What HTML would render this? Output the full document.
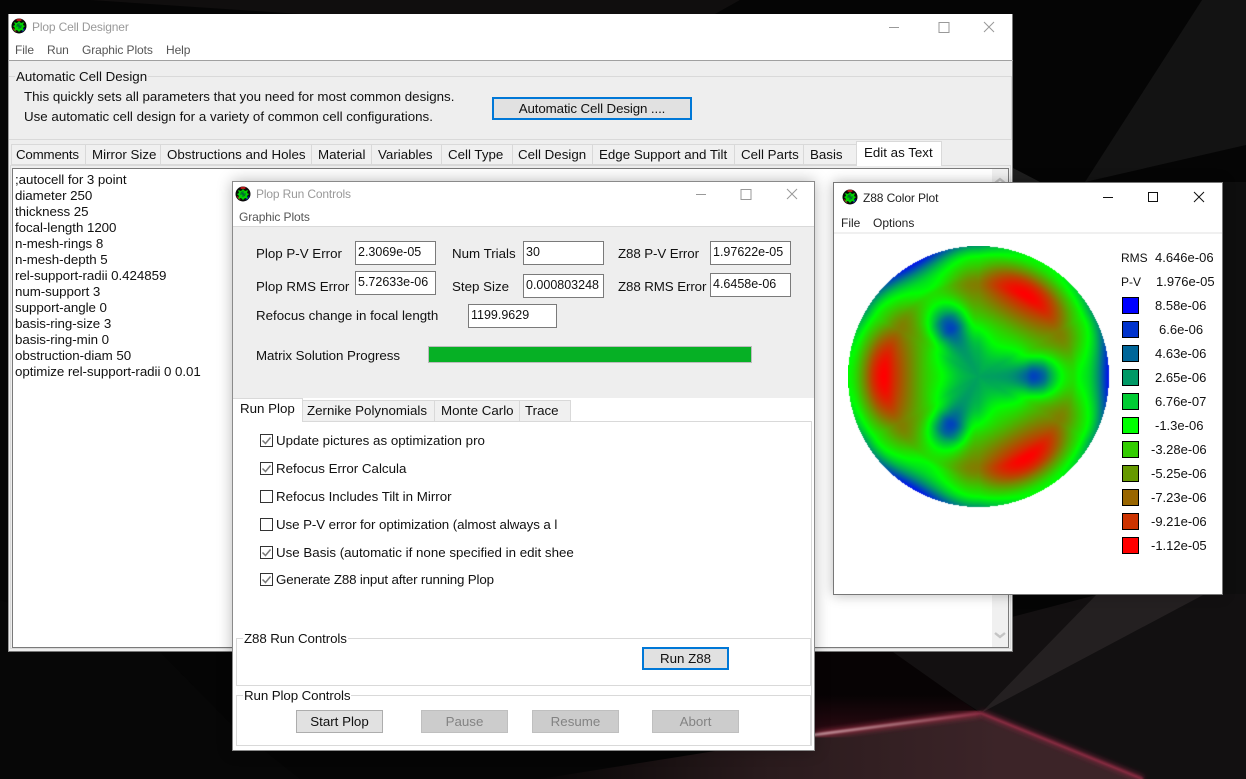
<!DOCTYPE html>
<html><head><meta charset="utf-8"><title>Plop Cell Designer</title>
<style>
html,body{margin:0;padding:0;width:1246px;height:779px;overflow:hidden;background:#050505}
body{position:relative;font-family:"Liberation Sans",sans-serif;font-size:13.33px;color:#111}
div,span,canvas,svg{position:absolute;box-sizing:border-box}
.t{white-space:nowrap;line-height:16px;height:16px;margin-top:1px}
.ttl{font-size:12px;color:#999;margin-top:0;letter-spacing:-.15px}
.mn{font-size:12px;color:#555;margin-top:0;letter-spacing:-.1px}
.tab{background:#f0f0f0;border:1px solid #d9d9d9;border-bottom:1px solid #d9d9d9;top:144px;height:21px}
.tab2{background:#f0f0f0;border:1px solid #d9d9d9;top:400px;height:22px}
.fld{background:#fff;border:1px solid #7a7a7a;line-height:20px;padding-left:2px;white-space:nowrap;font-size:12.5px}
.btn{background:#e1e1e1;text-align:center;white-space:nowrap}
.dis{background:#ccc;border:1px solid #bfbfbf;color:#838383;text-align:center;line-height:21px;width:87px;height:23px;top:710px}
.cb{left:260px;width:13px;height:13px;border:1px solid #333;background:#fff}
.sw{left:1122px;width:17px;height:17px;border:1px solid #000}
.l{font-size:13px}
</style></head><body>

<svg style="left:0;top:0" width="1246" height="779" viewBox="0 0 1246 779">
<defs>
<linearGradient id="floor" x1="540" y1="0" x2="1000" y2="0" gradientUnits="userSpaceOnUse"><stop offset="0" stop-color="#070606"/><stop offset=".5" stop-color="#2a1b1d"/><stop offset="1" stop-color="#3c2428"/></linearGradient>
<linearGradient id="glow" x1="0" y1="695" x2="0" y2="735" gradientUnits="userSpaceOnUse"><stop offset="0" stop-color="#070304"/><stop offset="1" stop-color="#2c0a12"/></linearGradient>
<linearGradient id="bright" x1="815" y1="0" x2="981" y2="0" gradientUnits="userSpaceOnUse"><stop offset="0" stop-color="#f0d0d4"/><stop offset=".6" stop-color="#b8808a"/><stop offset="1" stop-color="#98304a"/></linearGradient>
<filter id="b1"><feGaussianBlur stdDeviation="1"/></filter>
<filter id="b3"><feGaussianBlur stdDeviation="3"/></filter>
</defs>
<rect width="1246" height="779" fill="#050505"/>
<polygon points="90,0 740,0 715,14 300,14" fill="#100e0e"/>
<polygon points="0,600 160,652 232,725 300,779 0,779" fill="#070707"/>
<polygon points="1085,182 1202,0 1246,0 1246,145" fill="#131313"/>
<polygon points="1013,168 1040,182 1013,182" fill="#1e1e1e"/>
<polygon points="1222,182 1246,182 1246,594 1222,594" fill="#0e0e0e"/>
<polygon points="981,713 1100,594 1246,594 1246,779 1143,779" fill="#121011"/>
<polygon points="885,650 1100,594 981,713" fill="#131011"/>
<polygon points="815,652 893,652 978,712 815,735" fill="url(#glow)"/>
<polygon points="981,713 1097,594 1205,594" fill="#242021"/>
<polygon points="540,779 815,735 981,713 1143,779" fill="url(#floor)"/>
<polyline points="815,735 981,713" fill="none" stroke="#8a2c3e" stroke-width="6" filter="url(#b3)"/>
<polyline points="981,713 1143,779" fill="none" stroke="#8a2640" stroke-width="4" filter="url(#b3)"/>
<polyline points="981,713 1143,779" fill="none" stroke="#9c3048" stroke-width="1.6" filter="url(#b1)"/>
<line x1="790" y1="738" x2="981" y2="713" stroke="url(#bright)" stroke-width="1.8" filter="url(#b1)"/>
</svg>

<!-- MAIN WINDOW -->
<div style="left:8px;top:14px;width:1005px;height:638px;background:#eee;border:1px solid #777;border-top:0;border-left-color:#999">
</div>
<div style="left:9px;top:14px;width:1003px;height:46px;background:#fff"></div>
<div style="left:8px;top:60px;width:1005px;height:1px;background:#a0a0a0"></div>
<svg style="left:11px;top:18px" width="16" height="16" viewBox="0 0 16 16"><circle cx="8" cy="8" r="7.5" fill="#0a0a0a"/><path d="M8 .8a7 7 0 0 1 3 .7L10 3H6L5 1.5A7 7 0 0 1 8 .8z" fill="#b01818"/><path d="M1.5 10l3 1 1 3.2A7 7 0 0 1 1.5 10z" fill="#a01818"/><path d="M14.5 10l-3 1-1 3.2A7 7 0 0 0 14.5 10z" fill="#0000b0"/><path d="M3 4l3 1 2-2 2 2 3-1-1 3 2 1-2 2 1 3-3-1-2 2-2-2-3 1 1-3-2-2 2-1z" fill="#00d000"/><path d="M8 5v6M5 8h6M6 6l4 4" stroke="#063" stroke-width="1"/></svg>
<div class="t ttl" style="left:32px;top:19px">Plop Cell Designer</div>
<div class="t mn" style="left:15px;top:42px">File</div>
<div class="t mn" style="left:47px;top:42px">Run</div>
<div class="t mn" style="left:82px;top:42px">Graphic Plots</div>
<div class="t mn" style="left:166px;top:42px">Help</div>
<svg style="left:880px;top:14px" width="130" height="26"><path d="M9 13.5h10M59 8.5h10v10h-10zM104 8l10 10M114 8l-10 10" fill="none" stroke="#999" stroke-width="1"/></svg>

<div style="left:9px;top:76px;width:1003px;height:64px;border-top:1px solid #d9d9d9;border-bottom:1px solid #d9d9d9;border-right:1px solid #d9d9d9"></div>
<div class="t" style="left:15px;top:68px;background:#eee;padding:0 1px">Automatic Cell Design</div>
<div class="t" style="left:24px;top:88px">This quickly sets all parameters that you need for most common designs.</div>
<div class="t" style="left:24px;top:108px">Use automatic cell design for a variety of common cell configurations.</div>
<div class="btn" style="left:492px;top:97px;width:200px;height:23px;border:2px solid #0078d7;line-height:20px;letter-spacing:-.12px">Automatic Cell Design ....</div>

<div style="left:10px;top:165px;width:1001px;height:484px;border:1px solid #d9d9d9"></div>
<div class="tab" style="left:11px;width:75px"></div><div class="t" style="left:16px;top:146px;letter-spacing:-.2px">Comments</div>
<div class="tab" style="left:85px;width:76px"></div><div class="t" style="left:92px;top:146px">Mirror Size</div>
<div class="tab" style="left:160px;width:152px"></div><div class="t" style="left:167px;top:146px">Obstructions and Holes</div>
<div class="tab" style="left:311px;width:61px"></div><div class="t" style="left:318px;top:146px">Material</div>
<div class="tab" style="left:371px;width:71px"></div><div class="t" style="left:378px;top:146px">Variables</div>
<div class="tab" style="left:441px;width:72px"></div><div class="t" style="left:448px;top:146px">Cell Type</div>
<div class="tab" style="left:512px;width:81px"></div><div class="t" style="left:518px;top:146px">Cell Design</div>
<div class="tab" style="left:592px;width:143px"></div><div class="t" style="left:599px;top:146px">Edge Support and Tilt</div>
<div class="tab" style="left:734px;width:70px"></div><div class="t" style="left:741px;top:146px">Cell Parts</div>
<div class="tab" style="left:803px;width:54px"></div><div class="t" style="left:810px;top:146px">Basis</div>
<div style="left:856px;top:141px;width:86px;height:25px;background:#fff;border:1px solid #d9d9d9;border-bottom:0"></div>
<div class="t" style="left:864px;top:144px">Edit as Text</div>

<div style="left:12px;top:168px;width:997px;height:480px;background:#fff;border:1px solid #7a7a7a;border-width:1px"></div>
<div style="left:992px;top:169px;width:16px;height:478px;background:#f0f0f0"></div>
<svg style="left:992px;top:172px" width="16" height="472"><path d="M3 11l5-4 5 4" fill="none" stroke="#c4c4c4" stroke-width="2.4"/><path d="M3 461l5 4 5-4" fill="none" stroke="#c4c4c4" stroke-width="2.4"/></svg>
<div class="t" style="left:15px;top:171px;line-height:16px;height:auto;letter-spacing:-.05px">;autocell for 3 point<br>diameter 250<br>thickness 25<br>focal-length 1200<br>n-mesh-rings 8<br>n-mesh-depth 5<br>rel-support-radii 0.424859<br>num-support 3<br>support-angle 0<br>basis-ring-size 3<br>basis-ring-min 0<br>obstruction-diam 50<br>optimize rel-support-radii 0 0.01</div>

<!-- RUN WINDOW -->
<div style="left:232px;top:181px;width:583px;height:570px;background:#fff;border:1px solid #8a8a8a;box-shadow:0 0 14px rgba(0,0,0,.28)"></div>
<div style="left:233px;top:226px;width:581px;height:172px;background:#eee;border-top:1px solid #d9d9d9"></div>
<svg style="left:235px;top:186px" width="16" height="16" viewBox="0 0 16 16"><circle cx="8" cy="8" r="7.5" fill="#0a0a0a"/><path d="M8 .8a7 7 0 0 1 3 .7L10 3H6L5 1.5A7 7 0 0 1 8 .8z" fill="#b01818"/><path d="M1.5 10l3 1 1 3.2A7 7 0 0 1 1.5 10z" fill="#a01818"/><path d="M14.5 10l-3 1-1 3.2A7 7 0 0 0 14.5 10z" fill="#0000b0"/><path d="M3 4l3 1 2-2 2 2 3-1-1 3 2 1-2 2 1 3-3-1-2 2-2-2-3 1 1-3-2-2 2-1z" fill="#00d000"/><path d="M8 5v6M5 8h6M6 6l4 4" stroke="#063" stroke-width="1"/></svg>
<div class="t ttl" style="left:256px;top:186px">Plop Run Controls</div>
<div class="t mn" style="left:239px;top:209px">Graphic Plots</div>
<svg style="left:690px;top:181px" width="120" height="26"><path d="M6 13.5h10M51 8.5h10v10h-10zM97 8l10 10M107 8l-10 10" fill="none" stroke="#999" stroke-width="1"/></svg>

<div class="t" style="left:256px;top:245px">Plop P-V Error</div>
<div class="t" style="left:256px;top:278px">Plop RMS Error</div>
<div class="t" style="left:256px;top:307px">Refocus change in focal length</div>
<div class="t" style="left:256px;top:347px;letter-spacing:-.05px">Matrix Solution Progress</div>
<div class="t" style="left:452px;top:245px">Num Trials</div>
<div class="t" style="left:452px;top:278px">Step Size</div>
<div class="t" style="left:618px;top:245px;letter-spacing:-.1px">Z88 P-V Error</div>
<div class="t" style="left:618px;top:278px;letter-spacing:-.1px">Z88 RMS Error</div>
<div class="fld" style="left:355px;top:241px;width:81px;height:24px">2.3069e-05</div>
<div class="fld" style="left:355px;top:271px;width:81px;height:24px">5.72633e-06</div>
<div class="fld" style="left:523px;top:241px;width:81px;height:24px">30</div>
<div class="fld" style="left:523px;top:274px;width:81px;height:24px">0.000803248</div>
<div class="fld" style="left:710px;top:241px;width:81px;height:24px">1.97622e-05</div>
<div class="fld" style="left:710px;top:273px;width:81px;height:24px">4.6458e-06</div>
<div class="fld" style="left:468px;top:304px;width:89px;height:24px">1199.9629</div>
<div style="left:428px;top:346px;width:324px;height:17px;background:#06b025;border:1px solid #bcbcbc"></div>

<div style="left:233px;top:421px;width:579px;height:1px;background:#d9d9d9"></div>
<div style="left:811px;top:421px;width:1px;height:325px;background:#d9d9d9"></div>
<div class="tab2" style="left:302px;width:133px"></div><div class="t" style="left:307px;top:402px">Zernike Polynomials</div>
<div class="tab2" style="left:434px;width:86px"></div><div class="t" style="left:441px;top:402px">Monte Carlo</div>
<div class="tab2" style="left:519px;width:52px"></div><div class="t" style="left:525px;top:402px">Trace</div>
<div style="left:233px;top:398px;width:70px;height:24px;background:#fff;border:1px solid #d9d9d9;border-bottom:0;border-left:0"></div>
<div class="t" style="left:240px;top:400px">Run Plop</div>

<div class="cb" style="top:434px"></div><svg style="left:260px;top:434px" width="13" height="13"><path d="M2.5 6.5l3 3 5-6" fill="none" stroke="#777" stroke-width="1.5"/></svg>
<div class="t" style="left:276px;top:432px">Update pictures as optimization pro</div>
<div class="cb" style="top:462px"></div><svg style="left:260px;top:462px" width="13" height="13"><path d="M2.5 6.5l3 3 5-6" fill="none" stroke="#777" stroke-width="1.5"/></svg>
<div class="t" style="left:276px;top:460px">Refocus Error Calcula</div>
<div class="cb" style="top:490px"></div>
<div class="t" style="left:276px;top:488px">Refocus Includes Tilt in Mirror</div>
<div class="cb" style="top:518px"></div>
<div class="t" style="left:276px;top:516px;letter-spacing:-.08px">Use P-V error for optimization (almost always a l</div>
<div class="cb" style="top:546px"></div><svg style="left:260px;top:546px" width="13" height="13"><path d="M2.5 6.5l3 3 5-6" fill="none" stroke="#777" stroke-width="1.5"/></svg>
<div class="t" style="left:276px;top:544px">Use Basis (automatic if none specified in edit shee</div>
<div class="cb" style="top:573px"></div><svg style="left:260px;top:573px" width="13" height="13"><path d="M2.5 6.5l3 3 5-6" fill="none" stroke="#777" stroke-width="1.5"/></svg>
<div class="t" style="left:276px;top:571px;letter-spacing:-.16px">Generate Z88 input after running Plop</div>

<div style="left:236px;top:638px;width:575px;height:48px;border:1px solid #d9d9d9"></div>
<div class="t" style="left:243px;top:630px;background:#fff;padding:0 1px;letter-spacing:-.1px">Z88 Run Controls</div>
<div class="btn" style="left:642px;top:647px;width:87px;height:23px;border:2px solid #0078d7;line-height:20px">Run Z88</div>
<div style="left:236px;top:695px;width:575px;height:51px;border:1px solid #d9d9d9"></div>
<div class="t" style="left:243px;top:687px;background:#fff;padding:0 1px;letter-spacing:-.1px">Run Plop Controls</div>
<div class="btn" style="left:296px;top:710px;width:87px;height:23px;border:1px solid #adadad;line-height:22px">Start Plop</div>
<div class="dis" style="left:421px;line-height:22px">Pause</div>
<div class="dis" style="left:532px;line-height:22px">Resume</div>
<div class="dis" style="left:652px;line-height:22px">Abort</div>

<!-- COLOR PLOT WINDOW -->
<div style="left:833px;top:182px;width:390px;height:413px;background:#fff;border:1px solid #777;box-shadow:0 0 12px rgba(0,0,0,.28)"></div>
<div style="left:834px;top:232px;width:388px;height:2px;background:#f0f0f0"></div>
<svg style="left:842px;top:189px" width="16" height="16" viewBox="0 0 16 16"><circle cx="8" cy="8" r="7.5" fill="#0a0a0a"/><path d="M8 .8a7 7 0 0 1 3 .7L10 3H6L5 1.5A7 7 0 0 1 8 .8z" fill="#b01818"/><path d="M1.5 10l3 1 1 3.2A7 7 0 0 1 1.5 10z" fill="#a01818"/><path d="M14.5 10l-3 1-1 3.2A7 7 0 0 0 14.5 10z" fill="#0000b0"/><path d="M3 4l3 1 2-2 2 2 3-1-1 3 2 1-2 2 1 3-3-1-2 2-2-2-3 1 1-3-2-2 2-1z" fill="#00d000"/><path d="M8 5v6M5 8h6M6 6l4 4" stroke="#063" stroke-width="1"/></svg>
<div class="t" style="left:863px;top:190px;font-size:12px;color:#222;margin-top:0;letter-spacing:-.1px">Z88 Color Plot</div>
<div class="t" style="left:841px;top:215px;font-size:12px;color:#222;margin-top:0">File</div>
<div class="t" style="left:873px;top:215px;font-size:12px;color:#222;margin-top:0">Options</div>
<svg style="left:1095px;top:184px" width="120" height="26"><path d="M8 13.5h10M53.5 8.5h9v9h-9zM99 8l10 10M109 8l-10 10" fill="none" stroke="#111" stroke-width="1"/></svg>

<canvas id="plot" width="262" height="262" style="left:848px;top:246px"></canvas>

<div class="t" style="left:1121px;top:249px;font-size:12px">RMS</div><div class="t l" style="left:1155px;top:249px">4.646e-06</div>
<div class="t" style="left:1121px;top:273px;font-size:12px">P-V</div><div class="t l" style="left:1156px;top:273px">1.976e-05</div>
<div class="sw" style="top:297px;background:#0000ff"></div><div class="t l" style="left:1155px;top:297px">8.58e-06</div>
<div class="sw" style="top:321px;background:#0033cc"></div><div class="t l" style="left:1159px;top:321px">6.6e-06</div>
<div class="sw" style="top:345px;background:#006699"></div><div class="t l" style="left:1155px;top:345px">4.63e-06</div>
<div class="sw" style="top:369px;background:#009966"></div><div class="t l" style="left:1155px;top:369px">2.65e-06</div>
<div class="sw" style="top:393px;background:#00cc33"></div><div class="t l" style="left:1155px;top:393px">6.76e-07</div>
<div class="sw" style="top:417px;background:#00ff00"></div><div class="t l" style="left:1155px;top:417px">-1.3e-06</div>
<div class="sw" style="top:441px;background:#33cc00"></div><div class="t l" style="left:1151px;top:441px">-3.28e-06</div>
<div class="sw" style="top:465px;background:#669900"></div><div class="t l" style="left:1151px;top:465px">-5.25e-06</div>
<div class="sw" style="top:489px;background:#996600"></div><div class="t l" style="left:1151px;top:489px">-7.23e-06</div>
<div class="sw" style="top:513px;background:#cc3300"></div><div class="t l" style="left:1151px;top:513px">-9.21e-06</div>
<div class="sw" style="top:537px;background:#ff0000"></div><div class="t l" style="left:1151px;top:537px">-1.12e-05</div>

<script>
(function(){
var c=document.getElementById('plot'),g=c.getContext('2d'),W=262,R=130.5,cx=130.5,cy=130.5;
var im=g.createImageData(W,W),d=im.data;
/* profiles: [r,t] along k=1 (blue spot axis), k=0 (between), k=-1 (red lobe axis) */
var P0=[[0,.32],[.21,.3],[.28,.27],[.36,.2],[.42,.13],[.5,.2],[.55,.32],[.64,.5],[.72,.56],[.77,.5],[.85,.42],[.92,.27],[1,.03],[1.05,0]];
var Pm=[[0,.32],[.1,.33],[.25,.38],[.37,.5],[.46,.6],[.62,.72],[.72,.75],[.85,.6],[.92,.5],[1,.3],[1.05,.2]];
var P1=[[0,.32],[.15,.38],[.28,.5],[.42,.62],[.55,.78],[.64,.9],[.72,1],[.8,.92],[.88,.72],[.95,.56],[1,.5],[1.05,.45]];
function f(P,r){
  var n=P.length,i=0;while(i<n-2&&r>P[i+1][0])i++;
  var x0=P[i][0],x1=P[i+1][0],h=x1-x0,u=(r-x0)/h,y0=P[i][1],y1=P[i+1][1];
  var m0=i>0?(y1-P[i-1][1])/(x1-P[i-1][0]):(y1-y0)/h;
  var m1=i<n-2?(P[i+2][1]-y0)/(P[i+2][0]-x0):(y1-y0)/h;
  var u2=u*u,u3=u2*u;
  return (2*u3-3*u2+1)*y0+(u3-2*u2+u)*h*m0+(-2*u3+3*u2)*y1+(u3-u2)*h*m1;
}
for(var y=0;y<W;y++)for(var x=0;x<W;x++){
  var dx=x+.5-cx,dy=y+.5-cy,rr=Math.sqrt(dx*dx+dy*dy),p=(y*W+x)*4;
  if(rr>R){d[p+3]=0;continue}
  var r=rr/R,k=Math.cos(3*Math.atan2(dy,dx)),tm=f(Pm,r),t;
  if(k>=0)t=tm+(f(P0,r)-tm)*Math.pow(k,2.2);
  else t=tm+(f(P1,r)-tm)*(-k);
  t=Math.max(0,Math.min(1,t));
  if(t<.5){d[p]=0;d[p+1]=510*t;d[p+2]=255-510*t}
  else{d[p]=510*(t-.5);d[p+1]=255-510*(t-.5);d[p+2]=0}
  d[p+3]=255;
}
g.putImageData(im,0,0);
})();
</script>
</body></html>
